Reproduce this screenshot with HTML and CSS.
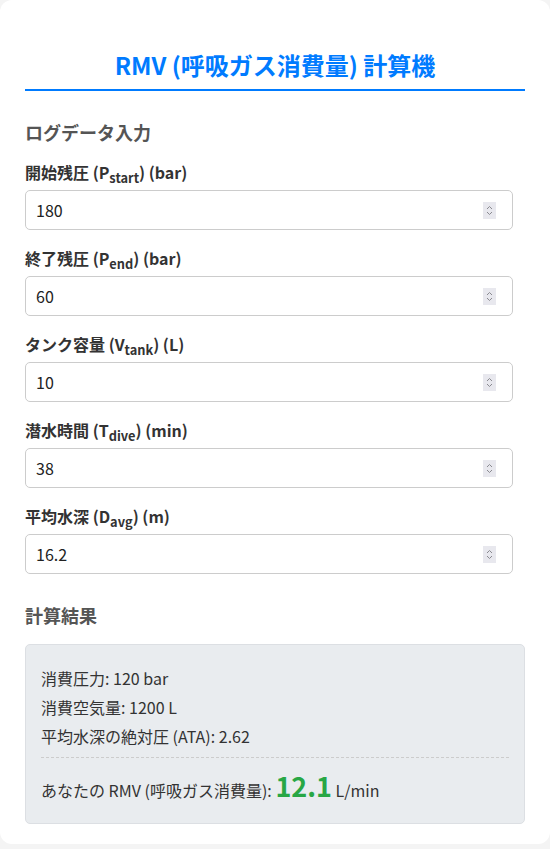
FILE: index.html
```html
<!DOCTYPE html>
<html lang="ja">
  <head>
    <meta charset="UTF-8" />
    <meta name="viewport" content="width=device-width, initial-scale=1" />
    <title>RMV 計算機</title>
    <link rel="stylesheet" href="styles.css">
  </head>
  <body>
    <div class="card">
      <h1>RMV (呼吸ガス消費量) 計算機</h1>

      <h2>ログデータ入力</h2>
      <div class="field">
        <label for="pstart">開始残圧 (P<sub>start</sub>) (bar)</label>
        <div class="input-wrap">
          <input type="number" id="pstart" value="180" />
          <span class="spin"><svg width="13" height="17" viewBox="0 0 13 17"><rect width="13" height="17" fill="#e8e8ee"/><path d="M4 7 L6.5 4.5 L9 7 M4 10 L6.5 12.5 L9 10" fill="none" stroke="#8a8a90" stroke-width="1"/></svg></span>
        </div>
      </div>
      <div class="field">
        <label for="pend">終了残圧 (P<sub>end</sub>) (bar)</label>
        <div class="input-wrap">
          <input type="number" id="pend" value="60" />
          <span class="spin"><svg width="13" height="17" viewBox="0 0 13 17"><rect width="13" height="17" fill="#e8e8ee"/><path d="M4 7 L6.5 4.5 L9 7 M4 10 L6.5 12.5 L9 10" fill="none" stroke="#8a8a90" stroke-width="1"/></svg></span>
        </div>
      </div>
      <div class="field">
        <label for="vtank">タンク容量 (V<sub>tank</sub>) (L)</label>
        <div class="input-wrap">
          <input type="number" id="vtank" value="10" />
          <span class="spin"><svg width="13" height="17" viewBox="0 0 13 17"><rect width="13" height="17" fill="#e8e8ee"/><path d="M4 7 L6.5 4.5 L9 7 M4 10 L6.5 12.5 L9 10" fill="none" stroke="#8a8a90" stroke-width="1"/></svg></span>
        </div>
      </div>
      <div class="field">
        <label for="tdive">潜水時間 (T<sub>dive</sub>) (min)</label>
        <div class="input-wrap">
          <input type="number" id="tdive" value="38" />
          <span class="spin"><svg width="13" height="17" viewBox="0 0 13 17"><rect width="13" height="17" fill="#e8e8ee"/><path d="M4 7 L6.5 4.5 L9 7 M4 10 L6.5 12.5 L9 10" fill="none" stroke="#8a8a90" stroke-width="1"/></svg></span>
        </div>
      </div>
      <div class="field">
        <label for="davg">平均水深 (D<sub>avg</sub>) (m)</label>
        <div class="input-wrap">
          <input type="number" id="davg" value="16.2" step="0.1" />
          <span class="spin"><svg width="13" height="17" viewBox="0 0 13 17"><rect width="13" height="17" fill="#e8e8ee"/><path d="M4 7 L6.5 4.5 L9 7 M4 10 L6.5 12.5 L9 10" fill="none" stroke="#8a8a90" stroke-width="1"/></svg></span>
        </div>
      </div>

      <h2>計算結果</h2>
      <div class="result">
        <p>消費圧力: 120 bar</p>
        <p>消費空気量: 1200 L</p>
        <p>平均水深の絶対圧 (ATA): 2.62</p>
        <div class="rmv">
          あなたの RMV (呼吸ガス消費量): <span class="rmv-value">12.1</span> L/min
        </div>
      </div>
    </div>
  </body>
</html>
```

FILE: styles.css
```css
body {
  margin: 0;
  background: #f4f4f4;
  font-family: "Noto Sans CJK JP", sans-serif;
  color: #333;
}
.card {
  background: #fff;
  border-radius: 12px;
  padding: 48px 25px 20px;
  min-height: 775px;
}
h1 {
  margin: 0;
  font-size: 24px;
  line-height: 33px;
  text-align: center;
  color: #007bff;
  padding-bottom: 8px;
  border-bottom: 2px solid #007bff;
}
h2 {
  font-size: 18px;
  line-height: 26px;
  color: #555;
  margin: 28px 0 16px;
}
.field {
  margin-bottom: 17px;
}
.field label {
  display: block;
  font-size: 16px;
  font-weight: bold;
  line-height: 22px;
  margin-bottom: 7px;
  color: #333;
}
.field sub {
  line-height: 0;
  font-size: 0.8em;
}
.input-wrap {
  position: relative;
  width: calc(100% - 12px);
}
.input-wrap input {
  display: block;
  box-sizing: border-box;
  width: 100%;
  height: 40px;
  padding: 0 10px;
  border: 1px solid #ccc;
  border-radius: 5px;
  font-family: "Noto Sans CJK JP", sans-serif;
  font-size: 16px;
  color: #222;
  background: #fff;
  -moz-appearance: textfield;
}
.input-wrap input::-webkit-inner-spin-button,
.input-wrap input::-webkit-outer-spin-button {
  -webkit-appearance: none;
  margin: 0;
}
.spin {
  position: absolute;
  right: 17px;
  top: 12px;
  width: 13px;
  height: 17px;
  line-height: 0;
}
.result {
  background: #e9ecef;
  border: 1px solid #dcdfe3;
  border-radius: 5px;
  padding: 15px;
  font-size: 16px;
}
.result p {
  margin: 8px 0;
  line-height: 21px;
}
.rmv {
  margin-top: 10px;
  padding: 11px 0 1px;
  border-top: 1px dashed #ccc;
  line-height: 34px;
}
.rmv-value {
  font-size: 27px;
  font-weight: bold;
  color: #28a745;
}
```
